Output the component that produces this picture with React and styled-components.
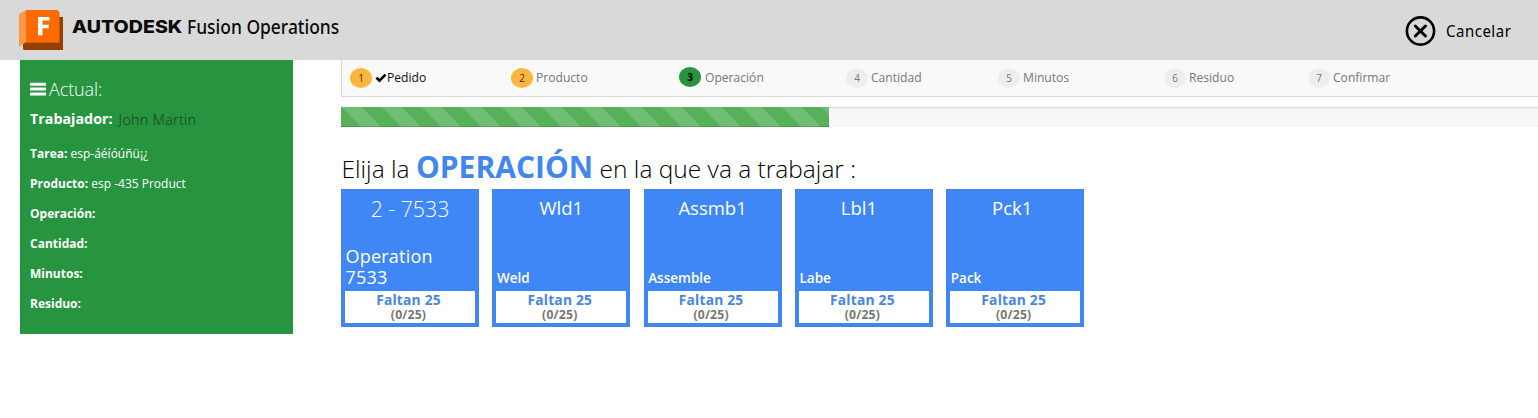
import React from "react";
import styled, { createGlobalStyle } from "styled-components";

const GlobalStyle = createGlobalStyle`
  * { box-sizing: border-box; }
  body {
    margin: 0;
    background: #fff;
    font-family: "Open Sans", "Noto Sans", sans-serif;
    overflow: hidden;
  }
`;

const Page = styled.div`
  width: 100%;
  height: 418px;
`;

const Header = styled.header`
  display: flex;
  align-items: flex-start;
  justify-content: space-between;
  height: 60px;
  padding: 9px 28px 0 19px;
  background: #d9d9d9;
`;

const Brand = styled.div`
  display: flex;
  align-items: flex-start;
`;

const BrandName = styled.span`
  width: 114px;
  margin: 4px 0 0 8px;
  font: 800 17.6px/28px Inter, sans-serif;
  color: #0a0a0a;
  white-space: nowrap;
  transform: scaleX(1.115);
  transform-origin: left;
`;

const ProductName = styled.span`
  margin: 4px 0 0 1px;
  font: 500 19px/28px "Noto Sans", sans-serif;
  color: #0a0a0a;
  white-space: nowrap;
  transform: scaleX(0.917);
  transform-origin: left;
`;

const CancelButton = styled.button`
  display: flex;
  align-items: center;
  gap: 10px;
  margin-top: 7px;
  padding: 0;
  border: 0;
  background: none;
  color: #000;
`;

const CancelLabel = styled.span`
  width: 64px;
  font: 400 17px/30px "Noto Sans", sans-serif;
  letter-spacing: 0.6px;
  text-align: left;
  white-space: nowrap;
  transform: scaleX(0.88);
  transform-origin: left;
`;

const Content = styled.div`
  display: flex;
  align-items: flex-start;
`;

const Sidebar = styled.aside`
  flex: none;
  width: 273px;
  height: 274px;
  margin-left: 20px;
  padding: 17px 10px 0;
  background: #27943f;
  color: #fff;
`;

const SidebarTitle = styled.h2`
  display: flex;
  align-items: center;
  gap: 3px;
  height: 24px;
  margin: 0 0 6px;
  font-size: 18px;
  font-weight: 300;
  letter-spacing: -0.1px;
`;

const Worker = styled.div`
  display: flex;
  height: 24px;
  margin-bottom: 8px;
  font-size: 14.3px;
  line-height: 24px;
`;

const WorkerName = styled.span`
  margin: 1px 0 0 6px;
  font-weight: 300;
  letter-spacing: 0.3px;
  color: #1d3a20;
`;

const Detail = styled.div`
  height: 30px;
  font-size: 12px;
  line-height: 30px;
  white-space: pre;
`;

const Main = styled.main`
  flex: 1;
  min-width: 0;
  margin-left: 48px;
`;

const Steps = styled.ol`
  display: flex;
  height: 37px;
  margin: 0;
  padding: 0 0 0 8px;
  list-style: none;
  background: #f9f9f9;
  border-left: 1px solid #d4d4d4;
  border-bottom: 1px solid #d9d9d9;
`;

const Step = styled.li`
  display: flex;
  align-items: center;
  flex: none;
  width: ${(p) => p.$width}px;
  height: 36px;
  font-size: 12.1px;
  color: ${(p) => (p.$done ? "#111" : "#777")};
`;

const badgeFill = { done: "#fdb53c", active: "#27943f", idle: "#eee" };
const badgeText = { done: "#333", active: "#000", idle: "#777" };

const Badge = styled.span`
  width: 22px;
  height: 20px;
  margin: ${(p) => (p.$state === "active" ? "-2px 4px 0 0" : "0 3px 0 0")};
  border-radius: 50%;
  background: ${(p) => badgeFill[p.$state]};
  color: ${(p) => badgeText[p.$state]};
  font-size: 10px;
  font-weight: ${(p) => (p.$state === "active" ? 700 : 400)};
  line-height: 20px;
  text-align: center;
`;

const StepLabel = styled.span`
  padding-bottom: 1px;
`;

const Track = styled.div`
  height: 20px;
  margin: 10px -4px 0 0;
  background: #f7f7f7;
  box-shadow: inset 0 1px 2px rgba(0, 0, 0, 0.15);
`;

const Bar = styled.div`
  width: 488px;
  height: 20px;
  background-color: #56b159;
  background-image: linear-gradient(
    45deg,
    rgba(255, 255, 255, 0.15) 25%,
    transparent 25%,
    transparent 50%,
    rgba(255, 255, 255, 0.15) 50%,
    rgba(255, 255, 255, 0.15) 75%,
    transparent 75%
  );
  background-size: 40px 40px;
  background-position: 1px 0;
  box-shadow: inset 0 -1px 0 rgba(0, 0, 0, 0.15);
`;

const Prompt = styled.h1`
  height: 42px;
  margin: 20px 0 0;
  padding-left: 0.5px;
  font-size: 24.5px;
  font-weight: 300;
  line-height: 40px;
  color: #000;
  white-space: nowrap;
`;

const Keyword = styled.strong`
  font-size: 30px;
  font-weight: 700;
  color: #4287ee;
`;

const Cards = styled.div`
  display: flex;
  gap: 13.3px;
`;

const Card = styled.article`
  display: flex;
  flex-direction: column;
  width: 138px;
  height: 138px;
  padding: 4px;
  background: #3f87f6;
  box-shadow: inset 0 0 0 1px #4583e0;
  color: #fff;
`;

const CardCode = styled.div`
  height: 32px;
  padding-right: ${(p) => p.$inset || 0}px;
  font-size: ${(p) => (p.$large ? 21.3 : 18.5)}px;
  font-weight: ${(p) => (p.$large ? 300 : 400)};
  line-height: ${(p) => (p.$large ? 32 : 30)}px;
  text-align: center;
`;

const CardName = styled.div`
  display: flex;
  flex: 1;
  align-items: flex-end;
  width: 110px;
  padding: 0 0 ${(p) => (p.$large ? 3 : 4)}px 0.6px;
  font-size: ${(p) => (p.$large ? 18 : 13.5)}px;
  font-weight: ${(p) => (p.$large ? 400 : 600)};
  letter-spacing: ${(p) => (p.$large ? 0.2 : 0)}px;
  line-height: ${(p) => (p.$large ? 21 : 18)}px;
`;

const CardStatus = styled.div`
  height: 32px;
  padding: 1px 3px 0 0;
  background: #fff;
  text-align: center;
`;

const Missing = styled.div`
  color: #4a86dc;
  font-size: 13.8px;
  font-weight: 700;
  letter-spacing: 0.2px;
  line-height: 16px;
`;

const Count = styled.div`
  color: #777;
  font-size: 12.2px;
  font-weight: 700;
  letter-spacing: 0.2px;
  line-height: 13px;
`;

const FusionLogo = () => (
  <svg width="45" height="42" viewBox="0 0 45 42">
    <path d="M39 8h5v33H5l-1-1v-6h35z" fill="#944000" />
    <path d="M0 5 7 1v32l-7 5z" fill="#ff9749" />
    <path d="M7 1h31.500l2 2v31H6l1-1z" fill="#ff6b00" />
    <path d="M7 33h33.500v1H5.500z" fill="#d55900" />
    <path d="M19 8h11.500v3.600h-7v4.200h6.300v3.500h-6.300v7H19z" fill="#fff" />
  </svg>
);

const CancelIcon = () => (
  <svg width="31" height="30" viewBox="0 0 31 30" fill="none" stroke="#000" strokeLinecap="round">
    <circle cx="15.5" cy="15" r="13.6" strokeWidth="2.6" />
    <path d="m10.300 10 10.200 10m0-10L10.300 20" strokeWidth="3" />
  </svg>
);

const MenuIcon = () => (
  <svg width="16" height="14" viewBox="0 0 16 14" fill="#fff">
    <rect y="0.7" width="16" height="3" rx=".5" />
    <rect y="5.6" width="16" height="3" rx=".5" />
    <rect y="10.4" width="16" height="3" rx=".5" />
  </svg>
);

const CheckIcon = () => (
  <svg width="12" height="10" viewBox="0 0 12 10" fill="none" stroke="#000" strokeWidth="2.6">
    <path d="m1.4 4.6 3.1 3.1 6-6" />
  </svg>
);

const details = [
  ["Tarea:", "esp-áéíóúñü¡¿"],
  ["Producto:", "esp -435 Product"],
  ["Operación:", ""],
  ["Cantidad:", ""],
  ["Minutos:", ""],
  ["Residuo:", ""],
];

const steps = [
  { label: "Pedido", state: "done", width: 161, checked: true },
  { label: "Producto", state: "done", width: 168 },
  { label: "Operación", state: "active", width: 167 },
  { label: "Cantidad", state: "idle", width: 152 },
  { label: "Minutos", state: "idle", width: 166 },
  { label: "Residuo", state: "idle", width: 144 },
  { label: "Confirmar", state: "idle", width: 120 },
];

const operations = [
  { code: "2 - 7533", name: "Operation 7533", large: true },
  { code: "Wld1", name: "Weld" },
  { code: "Assmb1", name: "Assemble", inset: 0 },
  { code: "Lbl1", name: "Labe", inset: 10 },
  { code: "Pck1", name: "Pack", inset: 6 },
];

export default function App() {
  return (
    <Page>
      <GlobalStyle />
      <Header>
        <Brand>
          <FusionLogo />
          <BrandName>AUTODESK</BrandName>
          <ProductName>Fusion Operations</ProductName>
        </Brand>
        <CancelButton>
          <CancelIcon />
          <CancelLabel>Cancelar</CancelLabel>
        </CancelButton>
      </Header>
      <Content>
        <Sidebar>
          <SidebarTitle>
            <MenuIcon />
            Actual:
          </SidebarTitle>
          <Worker>
            <b>Trabajador:</b>
            <WorkerName>John Martin</WorkerName>
          </Worker>
          {details.map(([label, value]) => (
            <Detail key={label}>
              <b>{label}</b> {value}
            </Detail>
          ))}
        </Sidebar>
        <Main>
          <Steps>
            {steps.map((step, i) => (
              <Step key={step.label} $width={step.width} $done={step.checked}>
                <Badge $state={step.state}>{i + 1}</Badge>
                {step.checked && <CheckIcon />}
                <StepLabel>{step.label}</StepLabel>
              </Step>
            ))}
          </Steps>
          <Track>
            <Bar />
          </Track>
          <Prompt>
            Elija la <Keyword>OPERACIÓN</Keyword> en la que va a trabajar :
          </Prompt>
          <Cards>
            {operations.map((op) => (
              <Card key={op.code}>
                <CardCode $large={op.large} $inset={op.inset}>{op.code}</CardCode>
                <CardName $large={op.large}>{op.name}</CardName>
                <CardStatus>
                  <Missing>Faltan 25</Missing>
                  <Count>(0/25)</Count>
                </CardStatus>
              </Card>
            ))}
          </Cards>
        </Main>
      </Content>
    </Page>
  );
}
